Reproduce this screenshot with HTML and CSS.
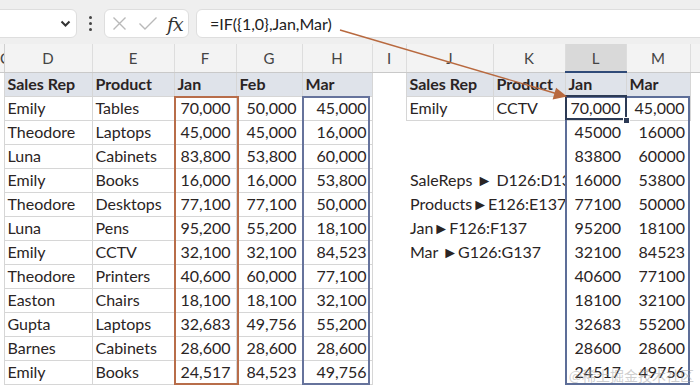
FILE: index.html
```html
<!DOCTYPE html>
<html lang="en">
<head>
    <meta charset="UTF-8">
    <title>IF array - Jan and Mar</title>
    <link rel="stylesheet" href="styles.css">
</head>
<body>
<div class="page">
    <div class="toolbar">
        <div class="namebox">
            <svg width="11" height="8" viewBox="0 0 11 8"><polyline points="1.5,1.5 5.5,5.5 9.5,1.5" fill="none" stroke="#333" stroke-width="2"/></svg>
        </div>
        <div class="dots"><span></span><span></span><span></span></div>
        <div class="fxbox">
            <svg class="fx-cancel" width="15" height="15" viewBox="0 0 15 15"><path d="M1.5 1.5 L13.5 13.5 M13.5 1.5 L1.5 13.5" stroke="#b9b9b9" stroke-width="1.4" fill="none"/></svg>
            <svg class="fx-enter" width="20" height="15" viewBox="0 0 20 15"><polyline points="1.5,7.5 7,13 18.5,1.5" stroke="#b9b9b9" stroke-width="1.4" fill="none"/></svg>
            <span class="fx">fx</span>
        </div>
        <div class="formula">=IF({1,0},Jan,Mar)</div>
    </div>

    <table class="grid">
        <colgroup>
            <col style="width:4px"><col style="width:88px"><col style="width:82px"><col style="width:62px">
            <col style="width:66px"><col style="width:70px"><col style="width:34px"><col style="width:87px">
            <col style="width:72px"><col style="width:61px"><col style="width:64px"><col style="width:10px">
        </colgroup>
        <thead>
            <tr>
                <th class="cut">C</th><th>D</th><th>E</th><th>F</th><th>G</th><th>H</th>
                <th>I</th><th>J</th><th>K</th><th class="sel">L</th><th>M</th><th></th>
            </tr>
        </thead>
        <tbody>
            <tr class="head">
                <td></td><td class="b">Sales Rep</td><td class="b">Product</td><td class="b">Jan</td><td class="b">Feb</td><td class="b">Mar</td>
                <td></td><td class="b">Sales Rep</td><td class="b">Product</td><td class="b">Jan</td><td class="b">Mar</td><td></td>
            </tr>
            <tr>
                <td></td><td class="b">Emily</td><td class="b">Tables</td><td class="b n">70,000</td><td class="b n">50,000</td><td class="b n">45,000</td>
                <td></td><td class="b">Emily</td><td class="b">CCTV</td><td class="b n">70,000</td><td class="b n">45,000</td><td></td>
            </tr>
            <tr>
                <td></td><td class="b">Theodore</td><td class="b">Laptops</td><td class="b n">45,000</td><td class="b n">45,000</td><td class="b n">16,000</td>
                <td></td><td></td><td></td><td class="n">45000</td><td class="n">16000</td><td></td>
            </tr>
            <tr>
                <td></td><td class="b">Luna</td><td class="b">Cabinets</td><td class="b n">83,800</td><td class="b n">53,800</td><td class="b n">60,000</td>
                <td></td><td></td><td></td><td class="n">83800</td><td class="n">60000</td><td></td>
            </tr>
            <tr>
                <td></td><td class="b">Emily</td><td class="b">Books</td><td class="b n">16,000</td><td class="b n">16,000</td><td class="b n">53,800</td>
                <td></td><td colspan="2" class="lbl">SaleReps &#9658; D126:D137</td><td class="n">16000</td><td class="n">53800</td><td></td>
            </tr>
            <tr>
                <td></td><td class="b">Theodore</td><td class="b">Desktops</td><td class="b n">77,100</td><td class="b n">77,100</td><td class="b n">50,000</td>
                <td></td><td colspan="2" class="lbl">Products&#9658;E126:E137</td><td class="n">77100</td><td class="n">50000</td><td></td>
            </tr>
            <tr>
                <td></td><td class="b">Luna</td><td class="b">Pens</td><td class="b n">95,200</td><td class="b n">55,200</td><td class="b n">18,100</td>
                <td></td><td colspan="2" class="lbl">Jan&#9658;F126:F137</td><td class="n">95200</td><td class="n">18100</td><td></td>
            </tr>
            <tr>
                <td></td><td class="b">Emily</td><td class="b">CCTV</td><td class="b n">32,100</td><td class="b n">32,100</td><td class="b n">84,523</td>
                <td></td><td colspan="2" class="lbl">Mar &#9658;G126:G137</td><td class="n">32100</td><td class="n">84523</td><td></td>
            </tr>
            <tr>
                <td></td><td class="b">Theodore</td><td class="b">Printers</td><td class="b n">40,600</td><td class="b n">60,000</td><td class="b n">77,100</td>
                <td></td><td></td><td></td><td class="n">40600</td><td class="n">77100</td><td></td>
            </tr>
            <tr>
                <td></td><td class="b">Easton</td><td class="b">Chairs</td><td class="b n">18,100</td><td class="b n">18,100</td><td class="b n">32,100</td>
                <td></td><td></td><td></td><td class="n">18100</td><td class="n">32100</td><td></td>
            </tr>
            <tr>
                <td></td><td class="b">Gupta</td><td class="b">Laptops</td><td class="b n">32,683</td><td class="b n">49,756</td><td class="b n">55,200</td>
                <td></td><td></td><td></td><td class="n">32683</td><td class="n">55200</td><td></td>
            </tr>
            <tr>
                <td></td><td class="b">Barnes</td><td class="b">Cabinets</td><td class="b n">28,600</td><td class="b n">28,600</td><td class="b n">28,600</td>
                <td></td><td></td><td></td><td class="n">28600</td><td class="n">28600</td><td></td>
            </tr>
            <tr>
                <td></td><td class="b">Emily</td><td class="b">Books</td><td class="b n">24,517</td><td class="b n">84,523</td><td class="b n">49,756</td>
                <td></td><td></td><td></td><td class="n">24517</td><td class="n">49756</td><td></td>
            </tr>
        </tbody>
    </table>

    <!-- range highlights drawn over the grid -->
    <div class="range range-jan"></div>
    <div class="range range-mar"></div>
    <div class="range range-spill"></div>
    <div class="active-cell"></div>
    <div class="fill-handle"></div>

    <svg class="arrow" width="700" height="389" viewBox="0 0 700 389">
        <line x1="340" y1="30" x2="556" y2="93.5" stroke="#b8693f" stroke-width="1.4"/>
        <polygon points="567,96.5 552.6,99.4 556.1,87.7" fill="#b8693f"/>
    </svg>

    <div class="watermark">@稀土掘金技术社区</div>
</div>
</body>
</html>
```

FILE: styles.css
```css
body {
    margin: 0;
    font-family: Lato, 'Liberation Sans', sans-serif;
    background-color: #ffffff;
    color: #2a2424;
}

.page {
    position: relative;
    width: 700px;
    height: 389px;
    overflow: hidden;
}

/* formula bar */
.toolbar {
    display: flex;
    align-items: flex-start;
    height: 44px;
    padding-top: 9px;
    box-sizing: border-box;
    background-color: #efefef;
}

.namebox, .fxbox, .formula {
    height: 29px;
    background-color: #ffffff;
    border: 1px solid #dedede;
    border-radius: 6px;
    box-sizing: border-box;
}

.namebox {
    width: 85px;
    margin-left: -8px;
    display: flex;
    align-items: center;
    justify-content: flex-end;
    padding-right: 5px;
}

.dots {
    width: 27px;
    height: 29px;
    display: flex;
    flex-direction: column;
    align-items: center;
    justify-content: center;
    gap: 3px;
}

.dots span {
    width: 3px;
    height: 3px;
    border-radius: 50%;
    background-color: #444;
}

.fxbox {
    width: 85px;
    display: flex;
    align-items: center;
    padding-left: 7px;
}

.fx-enter {
    margin-left: 11px;
}

.fx {
    margin-left: 9px;
    font-family: 'DejaVu Serif', 'Liberation Serif', serif;
    font-style: italic;
    font-size: 19px;
    color: #333;
    letter-spacing: -1px;
}

.formula {
    flex: 1;
    margin-left: 7px;
    margin-right: -10px;
    padding-left: 13px;
    font-size: 16px;
    line-height: 27px;
    color: #222;
}

/* sheet */
.grid {
    table-layout: fixed;
    width: 700px;
    border-collapse: collapse;
    font-size: 16px;
}

.grid th {
    height: 27px;
    padding: 0;
    font-weight: normal;
    font-size: 15px;
    color: #444;
    background-color: #f3f3f3;
    border-right: 1px solid #dddddd;
    border-bottom: 1px solid #c9c9c9;
    overflow: hidden;
}

.grid th.cut {
    text-align: right;
    border-right-color: #d0d0d0;
}

.grid th.sel {
    background-color: #d9d9d9;
    border-bottom: 2px solid #2f4a78;
}

.grid tbody tr {
    height: 24px;
}

.grid td {
    padding: 0 5px;
    white-space: nowrap;
    overflow: hidden;
    line-height: 22px;
}

.grid td.b {
    border: 1px solid #d6d6d6;
    padding-left: 3px;
}

.grid td.n {
    text-align: right;
    padding-right: 5px;
}

.grid tr.head td.b {
    background-color: #dfe3ea;
    font-weight: bold;
}

.grid td.lbl {
    padding-left: 4px;
    overflow: hidden;
}

/* highlighted ranges */
.range {
    position: absolute;
    box-sizing: border-box;
    border: 2px solid;
}

.range-jan {
    left: 174px;
    top: 96px;
    width: 65px;
    height: 289px;
    border-color: #b86d4a;
}

.range-mar {
    left: 302px;
    top: 96px;
    width: 68px;
    height: 289px;
    border-color: #66739c;
}

.range-spill {
    left: 565px;
    top: 96px;
    width: 125px;
    height: 289px;
    border-color: #5d6e98;
}

.active-cell {
    position: absolute;
    left: 565px;
    top: 95px;
    width: 62px;
    height: 25px;
    box-sizing: border-box;
    border: 2px solid #2c3a55;
}

.fill-handle {
    position: absolute;
    left: 623px;
    top: 117px;
    width: 5px;
    height: 5px;
    background-color: #2c3a55;
    border: 1px solid #ffffff;
}

.arrow {
    position: absolute;
    left: 0;
    top: 0;
}

.watermark {
    position: absolute;
    right: 6px;
    bottom: 4px;
    font-family: 'Noto Sans CJK SC', sans-serif;
    font-size: 14px;
    color: rgba(160, 160, 160, 0.5);
}
```
